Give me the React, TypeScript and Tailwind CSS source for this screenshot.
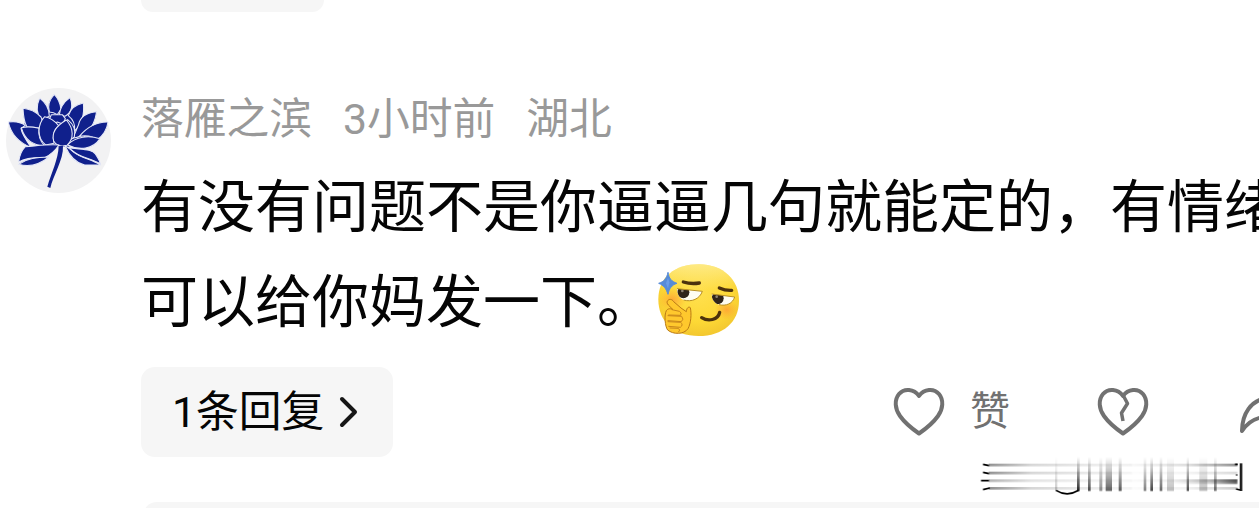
import type { ReactNode } from "react";

const META = ["落雁之滨", "3小时前", "湖北"];

// lotus petals, back to front
const PETALS = [
  "M163 43C147 60 142 76 148 96C157 96 165 99 172 104L183 88C181 69 174 55 163 43Z",
  "M119 54C109 76 107 99 125 119L148 109C148 86 138 68 119 54Z",
  "M210 53C193 65 180 82 178 105L195 109C214 98 221 80 210 53Z",
  "M250 69C225 74 211 88 205 107C220 119 226 134 224 153C244 133 254 103 250 69Z",
  "M69 85C70 110 73 128 81 141L119 144C126 128 129 120 123 111C107 95 90 87 69 85Z",
  "M290 95C259 98 240 112 236 133C230 149 226 158 218 175C250 170 281 154 290 95Z",
  "M25 126C33 164 56 187 94 203C78 180 65 161 63 145L76 136C62 126 45 123 25 126Z",
  "M324 126C289 125 259 144 238 169C258 166 278 168 291 180C310 166 321 149 324 126Z",
  "M154 104L148 118L160 131L172 126L188 132L196 116L187 104Z",
  "M64 143C73 175 92 196 134 198C119 182 114 166 117 145C97 140 80 139 64 143Z",
  "M300 176C266 165 229 169 202 194C238 213 279 208 300 176Z",
  "M134 110C112 133 110 174 137 195L162 190C157 168 163 148 176 137C163 121 147 112 134 110Z",
  "M203 119C221 133 227 153 223 171L204 185C207 157 203 144 190 134Z",
  "M199 120C168 138 154 159 161 183C169 197 184 201 201 196C222 177 222 146 199 120Z",
  "M177 195C142 192 107 198 76 200C64 212 58 229 56 246C82 231 112 233 134 233C151 225 166 211 177 195Z",
  "M56 253C81 235 110 232 147 231C121 252 91 263 56 253Z",
  "M195 197C207 225 223 247 254 255L302 255C272 238 242 233 222 217C211 208 205 203 195 197Z",
  "M206 203C241 209 276 206 286 222C294 234 299 242 301 251C270 234 238 231 220 214Z",
];

function LotusAvatar() {
  return (
    <svg viewBox="18 24 315 315" className="h-[105px] w-[105px]">
      <circle cx="175.500" cy="181.500" r="157.500" fill="#f2f2f3" />
      {/* solid core, so only the petal outlines stay light */}
      <path d="M80 110L130 95L165 80L205 90L245 110L262 150L240 190L205 200L150 198L100 190L68 150Z" fill="#10208c" />
      <g fill="#10208c" stroke="#e6e9f8" strokeWidth="3.200" strokeLinejoin="round">
        {PETALS.map((d) => (
          <path key={d} d={d} />
        ))}
      </g>
      <path d="M176 199C175 237 154 280 142 320L151 324C159 286 191 240 189 197Z" fill="#10208c" />
    </svg>
  );
}

function SmirkEmoji() {
  return (
    <svg viewBox="54 38 246 222" className="mb-[5px] ml-[4px] h-[74px] w-[82px]">
      <defs>
        <radialGradient id="face" cx="0.5" cy="0.4" r="0.62">
          <stop offset="0" stopColor="#ffe04f" />
          <stop offset="0.65" stopColor="#fdd835" />
          <stop offset="1" stopColor="#f2c62f" />
        </radialGradient>
        <radialGradient id="blush">
          <stop offset="0" stopColor="#ff8a35" stopOpacity="0.6" />
          <stop offset="1" stopColor="#ff9a35" stopOpacity="0" />
        </radialGradient>
        <linearGradient id="shine" x1="0" y1="0" x2="0" y2="1">
          <stop offset="0" stopColor="#fff6b8" stopOpacity="0.6" />
          <stop offset="0.35" stopColor="#fff6b8" stopOpacity="0" />
        </linearGradient>
        <clipPath id="eyeLeft">
          <path d="M111 115L187 123C179 146 155 156 131 149C119 144 112 133 111 115Z" />
        </clipPath>
        <clipPath id="eyeRight">
          <path d="M215 131L284 140C278 160 258 168 237 163C223 159 215 147 215 131Z" />
        </clipPath>
      </defs>
      <path d="M55 147C55 80 105 42 177 42C250 43 297 88 297 151C297 216 248 257 176 257C102 257 55 215 55 147Z" fill="url(#face)" />
      <path d="M55 147C55 80 105 42 177 42C250 43 297 88 297 151C297 216 248 257 176 257C102 257 55 215 55 147Z" fill="url(#shine)" />
      <ellipse cx="97" cy="147" rx="42" ry="34" fill="url(#blush)" />
      <ellipse cx="260" cy="178" rx="36" ry="30" fill="url(#blush)" />
      <g clipPath="url(#eyeLeft)">
        <rect x="105" y="110" width="90" height="50" fill="#fffdf2" />
        <circle cx="130" cy="126" r="18" fill="#30251a" />
        <circle cx="127" cy="122" r="4" fill="#8c8172" />
      </g>
      <path d="M111 115L187 123C179 146 155 156 131 149" fill="none" stroke="#b99023" strokeWidth="3" />
      <g clipPath="url(#eyeRight)">
        <rect x="210" y="126" width="80" height="50" fill="#fffdf2" />
        <circle cx="233" cy="144" r="18" fill="#30251a" />
        <circle cx="230" cy="139" r="4" fill="#8c8172" />
      </g>
      <path d="M215 131L284 140C278 160 258 168 237 163" fill="none" stroke="#b99023" strokeWidth="3" />
      <g fill="none" stroke="#4c320d" strokeLinecap="round">
        <path d="M130 95Q153 102 178 98" strokeWidth="10" />
        <path d="M238 113Q256 121 275 120" strokeWidth="10" />
        <path d="M185 202C204 214 234 210 239 186" strokeWidth="10" />
      </g>
      <path d="M84 66C87 85 94 93 111 99C95 104 88 114 84 132C78 114 71 105 56 99C72 94 80 85 84 66Z" fill="#568bd8" stroke="#568bd8" strokeWidth="3" strokeLinejoin="round" />
      <path d="M84 82L88 96L84 115L78 99Z" fill="#6a9de6" />
      <path
        d="M83 151C88 145 96 146 101 154L123 173L139 184C140 172 146 168 151 172C155 191 153 218 144 235C132 253 99 253 83 239C75 229 72 194 79 181C83 174 93 174 99 178L85 164C81 159 80 155 83 151Z"
        fill="#ffc82d"
        stroke="#b97916"
        strokeWidth="3"
        strokeLinejoin="round"
      />
      <g fill="none" stroke="#c8861b" strokeWidth="3" strokeLinecap="round">
        <path d="M96 178L118 183Q127 187 122 195L86 194" />
        <path d="M84 196L125 198Q133 207 124 214L84 211" />
        <path d="M84 214L122 216Q131 224 121 231L86 228" />
        <path d="M90 233L115 234Q123 239 116 245" />
      </g>
    </svg>
  );
}

function Heart({ broken = false }: { broken?: boolean }) {
  return (
    <svg viewBox="0 0 52 50" className="h-[50px] w-[52px]" fill="none" stroke="#717171" strokeWidth="4" strokeLinejoin="round">
      <path d="M26 9C21 1.500 11 1 6 7C1 13 2 22 7 29C12 36 18 41 26 46.500C34 41 40 36 45 29C50 22 51 13 46 7C41 1 31 1.500 26 9Z" />
      {broken && <path d="M26 8L30.500 16.500L24.500 26L26 34" strokeWidth="3.500" />}
    </svg>
  );
}

const SMEAR_ROWS = [
  { y: 45, start: 0.8, end: 0.45 },
  { y: 69, start: 0.8, end: 0.15 },
  { y: 92, start: 0.55, end: 0.25 },
  { y: 115, start: 0.8, end: 0.2 },
];

const SMEAR_BARS = [
  { x: 255, w: 7, o: 0.2 },
  { x: 321, w: 8, o: 0.85 },
  { x: 354, w: 8, o: 0.7 },
  { x: 388, w: 9, o: 0.45 },
  { x: 407, w: 19, o: 0.62 },
  { x: 446, w: 9, o: 0.65 },
  { x: 521, w: 8, o: 0.5 },
  { x: 541, w: 8, o: 0.75 },
  { x: 569, w: 8, o: 0.6 },
  { x: 591, w: 21, o: 0.25 },
  { x: 650, w: 7, o: 0.7 },
  { x: 688, w: 24, o: 0.25 },
  { x: 732, w: 8, o: 0.55 },
];

// stretched mark in the lower right corner
function SmearedMark() {
  return (
    <svg viewBox="0 0 867 174" className="absolute left-[970px] top-[450px] h-[58px] w-[289px]">
      <defs>
        <linearGradient id="fadeDown" x1="0" y1="0" x2="0" y2="1">
          <stop offset="0" stopColor="#000" stopOpacity="0" />
          <stop offset="0.4" stopColor="#000" stopOpacity="0.35" />
          <stop offset="1" stopColor="#000" />
        </linearGradient>
        <linearGradient id="fadeRight">
          <stop offset="0" stopColor="#000" stopOpacity="0.55" />
          <stop offset="0.3" stopColor="#000" stopOpacity="0.2" />
          <stop offset="1" stopColor="#000" stopOpacity="0.04" />
        </linearGradient>
        <linearGradient id="fadeLeft">
          <stop offset="0" stopColor="#000" stopOpacity="0" />
          <stop offset="0.6" stopColor="#000" stopOpacity="0.3" />
          <stop offset="1" stopColor="#000" />
        </linearGradient>
        <filter id="soft" x="-10%" y="-20%" width="120%" height="140%">
          <feGaussianBlur stdDeviation="2" />
        </filter>
      </defs>
      <g filter="url(#soft)">
        {SMEAR_ROWS.map(({ y, start, end }) => (
          <g key={y}>
            <rect x="56" y={y - 4} width="430" height="8" fill="url(#fadeRight)" opacity={start} />
            <rect x="440" y={y - 4} width="362" height="8" fill="url(#fadeLeft)" opacity={end} />
          </g>
        ))}
        <rect x="600" y="88" width="202" height="14" fill="url(#fadeLeft)" opacity="0.6" />
        {SMEAR_BARS.map(({ x, w, o }) => (
          <rect key={x} x={x} y="20" width={w} height="103" fill="url(#fadeDown)" opacity={o} />
        ))}
      </g>
      <g fill="none" stroke="#000" strokeWidth="5">
        <path d="M39 43L57 47M39 67L57 71M33 92H57M39 119L59 114" />
        <path d="M258 121Q291 142 326 121" />
        <path d="M813 40V123" strokeWidth="7" />
        <path d="M795 43H803M798 75H802M798 117L810 120" />
      </g>
    </svg>
  );
}

function Pill({ children }: { children: ReactNode }) {
  return <button type="button" className="flex h-[90px] w-[252px] shrink-0 items-center rounded-[14px] bg-[#f6f6f6] pl-[31px] text-[42.750px] text-[#050505]">{children}</button>;
}

export default function App() {
  return (
    <div className="relative flex h-[508px] w-[1259px] flex-col overflow-hidden bg-white font-[Roboto,'Noto_Sans_CJK_SC',sans-serif]">
      <div className="ml-[141px] h-3 w-[183px] shrink-0 rounded-b-[14px] bg-[#f6f6f6]" />

      <article className="mt-[76px] flex h-[414px] shrink-0 pl-[6px]">
        <div className="w-[135px] shrink-0">
          <LotusAvatar />
        </div>
        <div className="w-[1140px] shrink-0">
          <div className="flex h-[62px] items-center gap-[31px] whitespace-nowrap text-[42.750px] leading-[62px] text-[#999]">
            {META.map((item) => (
              <span key={item}>{item}</span>
            ))}
          </div>

          <div className="mt-[10px] whitespace-nowrap text-[57px] leading-[95px] text-[#050505]">
            <p className="h-[95px]">有没有问题不是你逼逼几句就能定的，有情绪</p>
            <p className="flex h-[95px] items-center">
              可以给你妈发一下。
              <SmirkEmoji />
            </p>
          </div>

          <div className="mt-[17px] flex items-center">
            <Pill>
              1条回复
              <svg viewBox="0 0 20 32" className="ml-[15px] h-8 w-5" fill="none" stroke="#161616" strokeWidth="4" strokeLinecap="round" strokeLinejoin="round">
                <path d="M3 3L16 16L3 29" />
              </svg>
            </Pill>
            <div className="ml-[500px] flex shrink-0 items-center text-[40px] text-[#717171]">
              <Heart />
              <span className="ml-[25px] leading-[50px]">赞</span>
              <span className="ml-[87px]">
                <Heart broken />
              </span>
              <svg viewBox="0 0 50 50" className="ml-[90px] h-[50px] w-[50px]" fill="none" stroke="#717171" strokeWidth="4" strokeLinejoin="round">
                <path d="M28 11V3L48 23L28 39V30C17 30 9 35 3 44C3 27 12 13 28 11Z" />
              </svg>
            </div>
          </div>

          <div className="ml-[2px] mt-[45px] h-5 rounded-t-[14px] bg-[#f6f6f6]" />
        </div>
      </article>
      <SmearedMark />
    </div>
  );
}
